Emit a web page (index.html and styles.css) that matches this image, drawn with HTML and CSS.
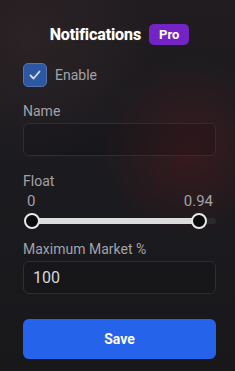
FILE: index.html
```html
<!DOCTYPE html>
<html lang="en">
<head>
    <meta charset="UTF-8">
    <meta name="viewport" content="width=device-width, initial-scale=1.0">
    <title>Notifications</title>
    <link rel="stylesheet" href="styles.css">
</head>
<body>
    <div class="panel">
        <div class="title-row">
            <h2 class="title">Notifications</h2>
            <span class="badge">Pro</span>
        </div>

        <label class="check-row">
            <span class="checkbox">
                <svg width="14" height="14" viewBox="0 0 14 14">
                    <path d="M2.5 7.5 L5.6 10.5 L11.5 3.5" fill="none" stroke="#d3dcef" stroke-width="1.8" stroke-linecap="round" stroke-linejoin="round"/>
                </svg>
            </span>
            <span class="check-label">Enable</span>
        </label>

        <div class="field">
            <span class="field-label">Name</span>
            <div class="input"></div>
        </div>

        <div class="field float-field">
            <span class="field-label">Float</span>
            <div class="range-values">
                <span>0</span>
                <span>0.94</span>
            </div>
            <div class="slider">
                <div class="track"></div>
                <div class="fill" style="width: 167px;"></div>
                <span class="thumb thumb-min"></span>
                <span class="thumb thumb-max" style="left: 167px;"></span>
            </div>
        </div>

        <div class="field market-field">
            <span class="field-label">Maximum Market %</span>
            <div class="input">100</div>
        </div>

        <button class="button">Save</button>
    </div>
</body>
</html>
```

FILE: styles.css
```css
:root {
    --text-muted: #a2a2a8;
    --border-color: #2e2d32;
    --primary-color: #2563eb;
    --pro-color: #7424c4;
}

html, body {
    height: 100%;
}

body {
    font-family: Roboto, 'Liberation Sans', sans-serif;
    margin: 0;
    width: 235px;
    min-height: 371px;
    color: #fff;
    background:
        radial-gradient(circle at 190px 150px, rgba(110, 24, 28, 0.32), rgba(110, 24, 28, 0) 90px),
        radial-gradient(circle at 30px 40px, rgba(70, 50, 50, 0.3), rgba(70, 50, 50, 0) 120px),
        linear-gradient(180deg, #201c20 0%, #1c1b1f 40%, #18181b 100%);
}

.panel {
    padding: 24px 19px 0 23px;
    display: flex;
    flex-direction: column;
}

.title-row {
    display: flex;
    justify-content: center;
    align-items: center;
    gap: 8px;
    height: 21px;
}

.title {
    margin: 0;
    font-size: 16px;
    font-weight: 700;
    letter-spacing: -0.1px;
    text-shadow: 0 0 1px rgba(255, 255, 255, 0.4);
}

.badge {
    background: var(--pro-color);
    color: #fff;
    font-size: 13px;
    font-weight: 700;
    height: 21px;
    line-height: 21px;
    padding: 0 10px;
    border-radius: 5px;
}

.check-row {
    display: flex;
    align-items: center;
    gap: 8px;
    margin-top: 18px;
}

.checkbox {
    width: 22px;
    height: 22px;
    border: 1px solid #5275ae;
    border-radius: 5px;
    background: #2c57a3;
    display: flex;
    justify-content: center;
    align-items: center;
}

.check-label {
    font-size: 14px;
    color: var(--text-muted);
}

.field {
    display: flex;
    flex-direction: column;
    margin-top: 16px;
}

.field-label {
    font-size: 14px;
    line-height: 17px;
    color: var(--text-muted);
    margin-bottom: 3px;
}

.input {
    height: 31px;
    border: 1px solid var(--border-color);
    border-radius: 6px;
    background: rgba(10, 10, 14, 0.15);
    padding-left: 9px;
    font-size: 16px;
    line-height: 31px;
    color: #d6d6da;
}

.float-field {
    margin-top: 17px;
}

.range-values {
    display: flex;
    justify-content: space-between;
    padding: 0 3px 0 4px;
    font-size: 15px;
    line-height: 17px;
    color: var(--text-muted);
}

.slider {
    position: relative;
    height: 14px;
    margin-top: 4px;
}

.track {
    position: absolute;
    left: 8px;
    right: 0;
    top: 4px;
    height: 6px;
    border-radius: 3px;
    background: #2a2a2e;
}

.fill {
    position: absolute;
    left: 8px;
    top: 4px;
    height: 6px;
    background: #dcdcdc;
}

.thumb {
    position: absolute;
    top: -1px;
    width: 12px;
    height: 12px;
    border: 2px solid #e8e8e8;
    border-radius: 50%;
    background: #0b0b0e;
}

.thumb-min {
    left: 1px;
}

.thumb-max {
    margin-left: 1px;
}

.market-field {
    margin-top: 13px;
}

.button {
    margin-top: 25px;
    height: 40px;
    border: none;
    border-radius: 6px;
    background: var(--primary-color);
    color: #fff;
    font-family: inherit;
    font-size: 14px;
    font-weight: 700;
    cursor: pointer;
}
```
